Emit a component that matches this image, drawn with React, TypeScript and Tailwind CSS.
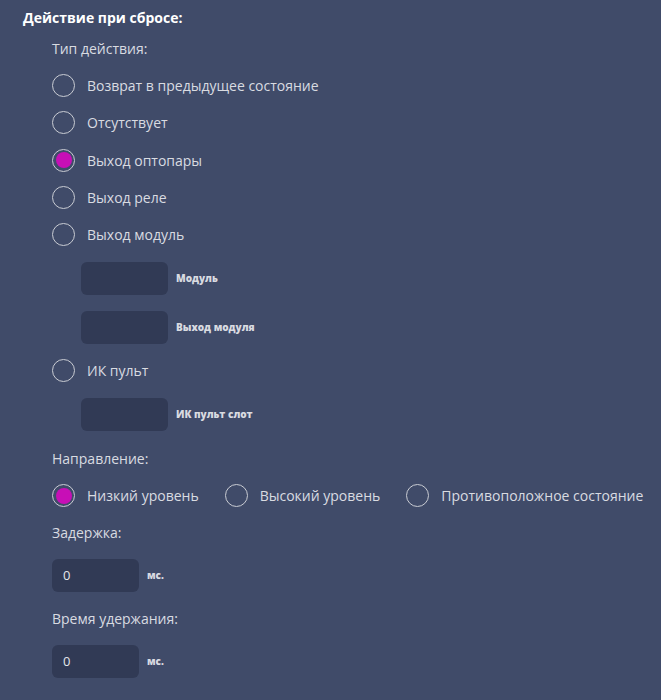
import React from "react";

const Radio = ({ checked, label }: { checked?: boolean; label: string }) => (
  <label className="flex items-center gap-[12px] cursor-pointer">
    <span className="w-[23px] h-[23px] rounded-full border-[1.5px] border-[#c9ccd3] flex items-center justify-center shrink-0">
      {checked && <span className="w-[16px] h-[16px] rounded-full bg-[#c70fb6]" />}
    </span>
    <span className="text-[14px] text-[#d9dbe1]">{label}</span>
  </label>
);

const Box = ({ label, value }: { label: string; value?: string }) => (
  <div className="flex items-center gap-[8px]">
    <div className="w-[87px] h-[33px] rounded-[6px] bg-[#313a55] flex items-center px-[11px] text-[13px] text-[#e4e6ea]">
      {value}
    </div>
    <span className="text-[10px] font-extrabold text-[#d9dbe1]">{label}</span>
  </div>
);

export default function App() {
  return (
    <div
      className="min-h-[700px] w-full bg-[#404b69] pl-[23px] pt-[8px]"
      style={{ fontFamily: '"Open Sans", sans-serif' }}
    >
      <div className="text-[14px] font-bold text-white leading-[19px]">Действие при сбросе:</div>
      <div className="pl-[29px] flex flex-col">
        <div className="mt-[12px] text-[14px] text-[#d9dbe1] leading-[19px]">Тип действия:</div>
        <div className="mt-[16px] flex flex-col gap-[14.3px]">
          <Radio label="Возврат в предыдущее состояние" />
          <Radio label="Отсутствует" />
          <Radio checked label="Выход оптопары" />
          <Radio label="Выход реле" />
          <Radio label="Выход модуль" />
        </div>
        <div className="pl-[29px] mt-[16px] flex flex-col gap-[16px]">
          <Box label="Модуль" />
          <Box label="Выход модуля" />
        </div>
        <div className="mt-[15px]">
          <Radio label="ИК пульт" />
        </div>
        <div className="pl-[29px] mt-[16px]">
          <Box label="ИК пульт слот" />
        </div>
        <div className="mt-[18px] text-[14px] text-[#d9dbe1] leading-[19px]">Направление:</div>
        <div className="mt-[16px] flex items-center gap-[26px]">
          <Radio checked label="Низкий уровень" />
          <Radio label="Высокий уровень" />
          <Radio label="Противоположное состояние" />
        </div>
        <div className="mt-[16px] text-[14px] text-[#d9dbe1] leading-[19px]">Задержка:</div>
        <div className="mt-[17px]">
          <Box label="мс." value="0" />
        </div>
        <div className="mt-[17px] text-[14px] text-[#d9dbe1] leading-[19px]">Время удержания:</div>
        <div className="mt-[17px]">
          <Box label="мс." value="0" />
        </div>
      </div>
    </div>
  );
}
